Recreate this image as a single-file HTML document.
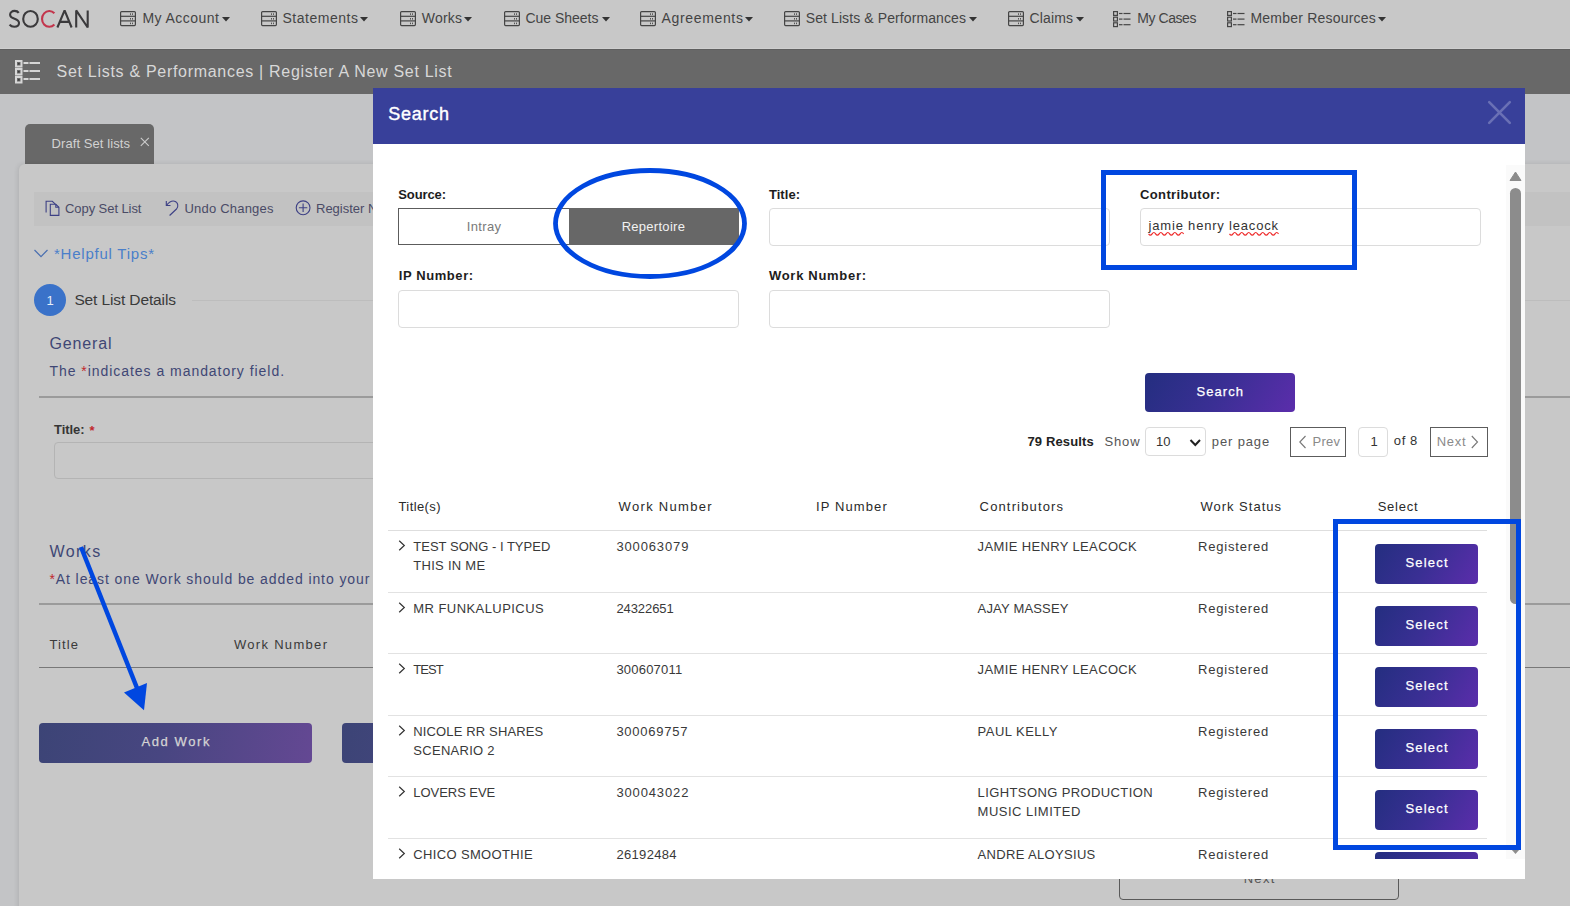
<!DOCTYPE html>
<html><head><meta charset="utf-8"><style>
html,body{margin:0;padding:0;}
body{width:1570px;height:906px;overflow:hidden;position:relative;background:#c3c4c6;font-family:"Liberation Sans", sans-serif;}
</style></head><body>
<div style="position:absolute;left:0px;top:0px;width:1570px;height:48px;background:#c8c8c8"></div>
<div style="position:absolute;left:0px;top:48px;width:1570px;height:1px;background:#cfcfcf"></div>
<div style="position:absolute;left:0px;top:49px;width:1570px;height:45px;background:#686868"></div>
<div style="position:absolute;left:0px;top:49px;width:1570px;height:1px;background:#5f5f5f"></div>
<svg style="position:absolute;left:0px;top:0px;" width="100" height="40" viewBox="0 0 100 40"><g fill="none" stroke="#3b3a3c" stroke-width="2.1" stroke-linejoin="bevel"><path d="M18.7 12.9 C17.8 11.5 16.4 10.9 14.6 10.9 C12 10.9 10.1 12.4 10.1 14.7 C10.1 17 12.1 17.9 14.6 18.7 C17.3 19.6 19 20.7 19 23.1 C19 25.4 17 26.8 14.3 26.8 C12.3 26.8 10.6 26 9.6 24.6"/><ellipse cx="30.5" cy="18.9" rx="7.3" ry="7.9"/><path d="M57.4 27.5 L64.6 10.4 L71.6 27.5 M59.8 21.9 L69.2 21.9"/><path d="M76.2 27.5 V10.4 L87.7 27.5 V10.4"/></g><path d="M54.4 13.2 A7.3 7.9 0 1 0 54.4 24.6" fill="none" stroke="#c3354c" stroke-width="2.1"/></svg>
<svg style="position:absolute;left:120px;top:10.5px;" width="16" height="16" viewBox="0 0 16 16"><g fill="none" stroke="#454545" stroke-width="1.2"><rect x="0.6" y="0.6" width="14.8" height="14" rx="1"/><line x1="0.6" y1="5.3" x2="15.4" y2="5.3"/><line x1="0.6" y1="9.9" x2="15.4" y2="9.9"/></g><g fill="#555"><rect x="10" y="2.3" width="1" height="1.6"/><rect x="12" y="2.3" width="1" height="1.6"/><rect x="10" y="7" width="1" height="1.6"/><rect x="12" y="7" width="1" height="1.6"/><rect x="10" y="11.6" width="1" height="1.6"/><rect x="12" y="11.6" width="1" height="1.6"/></g></svg>
<div style="position:absolute;left:142.40px;top:9.62px;font-size:14px;font-weight:400;color:#444444;letter-spacing:0.458px;white-space:nowrap;line-height:normal;">My Account</div>
<svg style="position:absolute;left:222px;top:17px;" width="8" height="5" viewBox="0 0 8 5"><path d="M0 0 L8 0 L4 4.5 Z" fill="#333"/></svg>
<svg style="position:absolute;left:260.5px;top:10.5px;" width="16" height="16" viewBox="0 0 16 16"><g fill="none" stroke="#454545" stroke-width="1.2"><rect x="0.6" y="0.6" width="14.8" height="14" rx="1"/><line x1="0.6" y1="5.3" x2="15.4" y2="5.3"/><line x1="0.6" y1="9.9" x2="15.4" y2="9.9"/></g><g fill="#555"><rect x="10" y="2.3" width="1" height="1.6"/><rect x="12" y="2.3" width="1" height="1.6"/><rect x="10" y="7" width="1" height="1.6"/><rect x="12" y="7" width="1" height="1.6"/><rect x="10" y="11.6" width="1" height="1.6"/><rect x="12" y="11.6" width="1" height="1.6"/></g></svg>
<div style="position:absolute;left:282.50px;top:9.62px;font-size:14px;font-weight:400;color:#444444;letter-spacing:0.519px;white-space:nowrap;line-height:normal;">Statements</div>
<svg style="position:absolute;left:360px;top:17px;" width="8" height="5" viewBox="0 0 8 5"><path d="M0 0 L8 0 L4 4.5 Z" fill="#333"/></svg>
<svg style="position:absolute;left:400px;top:10.5px;" width="16" height="16" viewBox="0 0 16 16"><g fill="none" stroke="#454545" stroke-width="1.2"><rect x="0.6" y="0.6" width="14.8" height="14" rx="1"/><line x1="0.6" y1="5.3" x2="15.4" y2="5.3"/><line x1="0.6" y1="9.9" x2="15.4" y2="9.9"/></g><g fill="#555"><rect x="10" y="2.3" width="1" height="1.6"/><rect x="12" y="2.3" width="1" height="1.6"/><rect x="10" y="7" width="1" height="1.6"/><rect x="12" y="7" width="1" height="1.6"/><rect x="10" y="11.6" width="1" height="1.6"/><rect x="12" y="11.6" width="1" height="1.6"/></g></svg>
<div style="position:absolute;left:421.80px;top:9.62px;font-size:14px;font-weight:400;color:#444444;letter-spacing:0.195px;white-space:nowrap;line-height:normal;">Works</div>
<svg style="position:absolute;left:464px;top:17px;" width="8" height="5" viewBox="0 0 8 5"><path d="M0 0 L8 0 L4 4.5 Z" fill="#333"/></svg>
<svg style="position:absolute;left:503.5px;top:10.5px;" width="16" height="16" viewBox="0 0 16 16"><g fill="none" stroke="#454545" stroke-width="1.2"><rect x="0.6" y="0.6" width="14.8" height="14" rx="1"/><line x1="0.6" y1="5.3" x2="15.4" y2="5.3"/><line x1="0.6" y1="9.9" x2="15.4" y2="9.9"/></g><g fill="#555"><rect x="10" y="2.3" width="1" height="1.6"/><rect x="12" y="2.3" width="1" height="1.6"/><rect x="10" y="7" width="1" height="1.6"/><rect x="12" y="7" width="1" height="1.6"/><rect x="10" y="11.6" width="1" height="1.6"/><rect x="12" y="11.6" width="1" height="1.6"/></g></svg>
<div style="position:absolute;left:525.50px;top:9.62px;font-size:14px;font-weight:400;color:#444444;letter-spacing:-0.030px;white-space:nowrap;line-height:normal;">Cue Sheets</div>
<svg style="position:absolute;left:601.5px;top:17px;" width="8" height="5" viewBox="0 0 8 5"><path d="M0 0 L8 0 L4 4.5 Z" fill="#333"/></svg>
<svg style="position:absolute;left:639.5px;top:10.5px;" width="16" height="16" viewBox="0 0 16 16"><g fill="none" stroke="#454545" stroke-width="1.2"><rect x="0.6" y="0.6" width="14.8" height="14" rx="1"/><line x1="0.6" y1="5.3" x2="15.4" y2="5.3"/><line x1="0.6" y1="9.9" x2="15.4" y2="9.9"/></g><g fill="#555"><rect x="10" y="2.3" width="1" height="1.6"/><rect x="12" y="2.3" width="1" height="1.6"/><rect x="10" y="7" width="1" height="1.6"/><rect x="12" y="7" width="1" height="1.6"/><rect x="10" y="11.6" width="1" height="1.6"/><rect x="12" y="11.6" width="1" height="1.6"/></g></svg>
<div style="position:absolute;left:661.60px;top:9.62px;font-size:14px;font-weight:400;color:#444444;letter-spacing:0.646px;white-space:nowrap;line-height:normal;">Agreements</div>
<svg style="position:absolute;left:745.4px;top:17px;" width="8" height="5" viewBox="0 0 8 5"><path d="M0 0 L8 0 L4 4.5 Z" fill="#333"/></svg>
<svg style="position:absolute;left:784px;top:10.5px;" width="16" height="16" viewBox="0 0 16 16"><g fill="none" stroke="#454545" stroke-width="1.2"><rect x="0.6" y="0.6" width="14.8" height="14" rx="1"/><line x1="0.6" y1="5.3" x2="15.4" y2="5.3"/><line x1="0.6" y1="9.9" x2="15.4" y2="9.9"/></g><g fill="#555"><rect x="10" y="2.3" width="1" height="1.6"/><rect x="12" y="2.3" width="1" height="1.6"/><rect x="10" y="7" width="1" height="1.6"/><rect x="12" y="7" width="1" height="1.6"/><rect x="10" y="11.6" width="1" height="1.6"/><rect x="12" y="11.6" width="1" height="1.6"/></g></svg>
<div style="position:absolute;left:805.70px;top:9.62px;font-size:14px;font-weight:400;color:#444444;letter-spacing:0.102px;white-space:nowrap;line-height:normal;">Set Lists &amp; Performances</div>
<svg style="position:absolute;left:968.7px;top:17px;" width="8" height="5" viewBox="0 0 8 5"><path d="M0 0 L8 0 L4 4.5 Z" fill="#333"/></svg>
<svg style="position:absolute;left:1007.5px;top:10.5px;" width="16" height="16" viewBox="0 0 16 16"><g fill="none" stroke="#454545" stroke-width="1.2"><rect x="0.6" y="0.6" width="14.8" height="14" rx="1"/><line x1="0.6" y1="5.3" x2="15.4" y2="5.3"/><line x1="0.6" y1="9.9" x2="15.4" y2="9.9"/></g><g fill="#555"><rect x="10" y="2.3" width="1" height="1.6"/><rect x="12" y="2.3" width="1" height="1.6"/><rect x="10" y="7" width="1" height="1.6"/><rect x="12" y="7" width="1" height="1.6"/><rect x="10" y="11.6" width="1" height="1.6"/><rect x="12" y="11.6" width="1" height="1.6"/></g></svg>
<div style="position:absolute;left:1029.50px;top:9.62px;font-size:14px;font-weight:400;color:#444444;letter-spacing:0.144px;white-space:nowrap;line-height:normal;">Claims</div>
<svg style="position:absolute;left:1075.7px;top:17px;" width="8" height="5" viewBox="0 0 8 5"><path d="M0 0 L8 0 L4 4.5 Z" fill="#333"/></svg>
<svg style="position:absolute;left:1113px;top:11px;" width="18.5" height="17" viewBox="0 0 18.5 17"><g fill="none" stroke="#454545" stroke-width="1.2"><rect x="0.6" y="0.6" width="3.8" height="3.8"/><line x1="6" y1="2.5" x2="9.5" y2="2.5"/><line x1="10.5" y1="2.5" x2="17.5" y2="2.5"/><rect x="0.6" y="6.199999999999999" width="3.8" height="3.8"/><line x1="6" y1="8.1" x2="9.5" y2="8.1"/><line x1="10.5" y1="8.1" x2="17.5" y2="8.1"/><rect x="0.6" y="11.799999999999999" width="3.8" height="3.8"/><line x1="6" y1="13.7" x2="9.5" y2="13.7"/><line x1="10.5" y1="13.7" x2="17.5" y2="13.7"/></g></svg>
<div style="position:absolute;left:1137.30px;top:9.62px;font-size:14px;font-weight:400;color:#444444;letter-spacing:-0.448px;white-space:nowrap;line-height:normal;">My Cases</div>
<svg style="position:absolute;left:1227px;top:11px;" width="18.5" height="17" viewBox="0 0 18.5 17"><g fill="none" stroke="#454545" stroke-width="1.2"><rect x="0.6" y="0.6" width="3.8" height="3.8"/><line x1="6" y1="2.5" x2="9.5" y2="2.5"/><line x1="10.5" y1="2.5" x2="17.5" y2="2.5"/><rect x="0.6" y="6.199999999999999" width="3.8" height="3.8"/><line x1="6" y1="8.1" x2="9.5" y2="8.1"/><line x1="10.5" y1="8.1" x2="17.5" y2="8.1"/><rect x="0.6" y="11.799999999999999" width="3.8" height="3.8"/><line x1="6" y1="13.7" x2="9.5" y2="13.7"/><line x1="10.5" y1="13.7" x2="17.5" y2="13.7"/></g></svg>
<div style="position:absolute;left:1250.40px;top:9.62px;font-size:14px;font-weight:400;color:#444444;letter-spacing:0.216px;white-space:nowrap;line-height:normal;">Member Resources</div>
<svg style="position:absolute;left:1378.4px;top:17px;" width="8" height="5" viewBox="0 0 8 5"><path d="M0 0 L8 0 L4 4.5 Z" fill="#333"/></svg>
<svg style="position:absolute;left:15px;top:60px;" width="26" height="24" viewBox="0 0 26 24"><g fill="none" stroke="#d6d6d6" stroke-width="2"><rect x="1" y="1" width="5.5" height="5.5"/><rect x="1" y="9" width="5.5" height="5.5"/><rect x="1" y="17" width="5.5" height="5.5"/></g><g stroke="#d6d6d6" stroke-width="2.2"><path d="M8.5 3 H13.5 M14.5 3 H25 M8.5 11 H13.5 M14.5 11 H25 M8.5 19 H13.5 M14.5 19 H25"/></g><g fill="#3a3a3a"><rect x="3" y="3" width="1.6" height="1.6"/><rect x="3" y="11" width="1.6" height="1.6"/><rect x="3" y="19" width="1.6" height="1.6"/></g></svg>
<div style="position:absolute;left:56.60px;top:63.28px;font-size:16px;font-weight:400;color:#d8d8d8;letter-spacing:0.701px;white-space:nowrap;line-height:normal;">Set Lists &amp; Performances | Register A New Set List</div>
<div style="position:absolute;left:25px;top:124px;width:129px;height:40px;background:#686868;border-radius:5px 5px 0 0"></div>
<div style="position:absolute;left:51.50px;top:135.54px;font-size:13px;font-weight:400;color:#d2d2d2;letter-spacing:0.086px;white-space:nowrap;line-height:normal;">Draft Set lists</div>
<svg style="position:absolute;left:140px;top:137px;" width="10" height="10" viewBox="0 0 10 10"><path d="M0.8 0.8 L8.8 8.8 M8.8 0.8 L0.8 8.8" stroke="#cccccc" stroke-width="1.1"/></svg>
<div style="position:absolute;left:19px;top:164px;width:1600px;height:760px;background:#c8c8c8;border-radius:6px 0 0 0;box-shadow:-1px 0 5px rgba(0,0,0,0.10)"></div>
<div style="position:absolute;left:34px;top:192px;width:1540px;height:34px;background:#c2c2c2"></div>
<svg style="position:absolute;left:45px;top:200px;" width="16" height="17" viewBox="0 0 16 17"><g fill="none" stroke="#3d4085" stroke-width="1.1"><path d="M1.1 12.5 V1.3 H7.3 L10.3 4.2"/><path d="M5.3 15.4 V4.3 H10.8 L13.9 7.3 V15.4 Z"/><path d="M10.8 4.3 V7.3 H13.9"/></g></svg>
<div style="position:absolute;left:65.00px;top:201.04px;font-size:13px;font-weight:400;color:#4a4b66;letter-spacing:-0.069px;white-space:nowrap;line-height:normal;">Copy Set List</div>
<svg style="position:absolute;left:164px;top:199px;" width="16" height="18" viewBox="0 0 16 18"><g fill="none" stroke="#3d4085" stroke-width="1.1"><path d="M2.3 2 V6.5 H6.5"/><path d="M2.6 6.2 C5 3.2 8 1.6 10.5 2.2 C14.5 3.2 14.5 8 12.5 10 L5.6 16.5"/></g></svg>
<div style="position:absolute;left:184.50px;top:201.04px;font-size:13px;font-weight:400;color:#4a4b66;letter-spacing:0.206px;white-space:nowrap;line-height:normal;">Undo Changes</div>
<svg style="position:absolute;left:294px;top:199px;" width="18" height="18" viewBox="0 0 18 18"><g fill="none" stroke="#3d4085" stroke-width="1.1"><circle cx="9.1" cy="8.8" r="6.9"/><path d="M9.1 4.6 V13 M4.9 8.8 H13.3"/></g></svg>
<div style="position:absolute;left:316.00px;top:201.04px;font-size:13px;font-weight:400;color:#4a4b66;letter-spacing:0.000px;white-space:nowrap;line-height:normal;">Register New Set List</div>
<svg style="position:absolute;left:33px;top:248px;" width="17" height="11" viewBox="0 0 17 11"><path d="M1.5 2 L8 8.6 L14.5 2" fill="none" stroke="#4a6fb0" stroke-width="1.2"/></svg>
<div style="position:absolute;left:54.00px;top:244.70px;font-size:15px;font-weight:400;color:#4a7fca;letter-spacing:0.766px;white-space:nowrap;line-height:normal;">*Helpful Tips*</div>
<div style="position:absolute;left:34px;top:284px;width:32px;height:32px;background:#3a72c9;border-radius:50%"></div>
<div style="position:absolute;left:46.50px;top:293.04px;font-size:13px;font-weight:400;color:#e8eef8;letter-spacing:0.000px;white-space:nowrap;line-height:normal;">1</div>
<div style="position:absolute;left:74.40px;top:291.24px;font-size:15.5px;font-weight:400;color:#3a3a3a;letter-spacing:-0.119px;white-space:nowrap;line-height:normal;">Set List Details</div>
<div style="position:absolute;left:192px;top:300px;width:1400px;height:1px;background:#bdbdbd"></div>
<div style="position:absolute;left:49.60px;top:334.58px;font-size:16px;font-weight:400;color:#3f4775;letter-spacing:0.830px;white-space:nowrap;line-height:normal;">General</div>
<div style="position:absolute;left:49.40px;top:362.72px;font-size:14px;font-weight:400;color:#3f4775;letter-spacing:0.960px;white-space:nowrap;line-height:normal;">The <span style="color:#c1272d">*</span>indicates a mandatory field.</div>
<div style="position:absolute;left:39px;top:396px;width:1560px;height:2px;background:#9b9b9b"></div>
<div style="position:absolute;left:54.00px;top:421.54px;font-size:13px;font-weight:700;color:#353535;letter-spacing:-0.046px;white-space:nowrap;line-height:normal;">Title:</div>
<div style="position:absolute;left:89.50px;top:423.04px;font-size:13px;font-weight:700;color:#c1272d;letter-spacing:0.000px;white-space:nowrap;line-height:normal;">*</div>
<div style="position:absolute;left:54px;top:442px;width:1400px;height:37px;border:1px solid #b4b4b4;border-radius:4px;box-sizing:border-box"></div>
<div style="position:absolute;left:49.40px;top:542.88px;font-size:16px;font-weight:400;color:#3f4775;letter-spacing:1.438px;white-space:nowrap;line-height:normal;">Works</div>
<div style="position:absolute;left:49.40px;top:570.62px;font-size:14px;font-weight:400;color:#3f4775;letter-spacing:0.914px;white-space:nowrap;line-height:normal;"><span style="color:#c1272d">*</span>At least one Work should be added into your Set List.</div>
<div style="position:absolute;left:39px;top:603px;width:1560px;height:2px;background:#9b9b9b"></div>
<div style="position:absolute;left:49.40px;top:637.44px;font-size:13px;font-weight:400;color:#3a3a3a;letter-spacing:1.130px;white-space:nowrap;line-height:normal;">Title</div>
<div style="position:absolute;left:233.90px;top:637.44px;font-size:13px;font-weight:400;color:#3a3a3a;letter-spacing:1.315px;white-space:nowrap;line-height:normal;">Work Number</div>
<div style="position:absolute;left:39px;top:667px;width:1560px;height:1px;background:#787878"></div>
<div style="position:absolute;left:39px;top:723px;width:273px;height:40px;background:linear-gradient(100deg,#3c4476 0%,#484681 45%,#644893 100%);border-radius:4px"></div>
<div style="position:absolute;left:141.50px;top:734.44px;font-size:13px;font-weight:400;color:#d4d4d4;letter-spacing:1.579px;white-space:nowrap;line-height:normal;-webkit-text-stroke:0.25px #d4d4d4;">Add Work</div>
<div style="position:absolute;left:342px;top:723px;width:273px;height:40px;background:linear-gradient(100deg,#3c4476 0%,#484681 45%,#644893 100%);border-radius:4px"></div>
<div style="position:absolute;left:1119px;top:840px;width:280px;height:60px;border:1px solid #5a5a5a;border-radius:4px;box-sizing:border-box"></div>
<div style="position:absolute;left:1243.70px;top:871.04px;font-size:13px;font-weight:400;color:#555;letter-spacing:1.289px;white-space:nowrap;line-height:normal;">Next</div>
<svg style="position:absolute;left:60px;top:530px;" width="110" height="190" viewBox="0 0 110 190"><line x1="21" y1="17" x2="77" y2="158" stroke="#0047e0" stroke-width="4.5"/><path d="M64 162.5 L87 153 L84 180.3 Z" fill="#0047e0"/></svg>
<div style="position:absolute;left:373px;top:88px;width:1152px;height:791px;background:#ffffff"></div>
<div style="position:absolute;left:373px;top:88px;width:1152px;height:56px;background:#38409a"></div>
<div style="position:absolute;left:388.30px;top:104.44px;font-size:18px;font-weight:400;color:#ffffff;letter-spacing:0.751px;white-space:nowrap;line-height:normal;-webkit-text-stroke:0.4px #ffffff;">Search</div>
<svg style="position:absolute;left:1487px;top:100px;" width="25" height="25" viewBox="0 0 25 25"><path d="M2.2 2.2 L22.8 22.8 M22.8 2.2 L2.2 22.8" stroke="#6a70b5" stroke-width="2.6" stroke-linecap="round"/></svg>
<div style="position:absolute;left:398.30px;top:187.14px;font-size:13px;font-weight:700;color:#1d1d1d;letter-spacing:-0.118px;white-space:nowrap;line-height:normal;">Source:</div>
<div style="position:absolute;left:768.90px;top:187.14px;font-size:13px;font-weight:700;color:#1d1d1d;letter-spacing:0.074px;white-space:nowrap;line-height:normal;">Title:</div>
<div style="position:absolute;left:1140.00px;top:187.14px;font-size:13px;font-weight:700;color:#1d1d1d;letter-spacing:0.381px;white-space:nowrap;line-height:normal;">Contributor:</div>
<div style="position:absolute;left:398px;top:208px;width:172px;height:37px;border:1px solid #5c5c5c;box-sizing:border-box;background:#fff"></div>
<div style="position:absolute;left:466.80px;top:219.04px;font-size:13px;font-weight:400;color:#7a7a7a;letter-spacing:0.337px;white-space:nowrap;line-height:normal;">Intray</div>
<div style="position:absolute;left:569px;top:208px;width:170px;height:37px;background:#676767"></div>
<div style="position:absolute;left:621.70px;top:219.04px;font-size:13px;font-weight:400;color:#f2f2f2;letter-spacing:0.277px;white-space:nowrap;line-height:normal;">Repertoire</div>
<div style="position:absolute;left:769px;top:208px;width:341px;height:38px;border:1px solid #dcdcdc;border-radius:4px;box-sizing:border-box;background:#fff"></div>
<div style="position:absolute;left:1140px;top:208px;width:341px;height:38px;border:1px solid #dcdcdc;border-radius:4px;box-sizing:border-box;background:#fff"></div>
<div style="position:absolute;left:1148.60px;top:217.84px;font-size:13px;font-weight:400;color:#333;letter-spacing:0.806px;white-space:nowrap;line-height:normal;">jamie henry leacock</div>
<svg style="position:absolute;left:1146px;top:230px;" width="136" height="8" viewBox="0 0 136 8"><path d="M2.6 1.5 q1.75 2.6 3.5 0 q1.75 -2.6 3.5 0 q1.75 2.6 3.5 0 q1.75 -2.6 3.5 0 q1.75 2.6 3.5 0 q1.75 -2.6 3.5 0 q1.75 2.6 3.5 0 q1.75 -2.6 3.5 0 q1.75 2.6 3.5 0 q1.75 -2.6 3.5 0 M83.5 1.5 q1.75 2.6 3.5 0 q1.75 -2.6 3.5 0 q1.75 2.6 3.5 0 q1.75 -2.6 3.5 0 q1.75 2.6 3.5 0 q1.75 -2.6 3.5 0 q1.75 2.6 3.5 0 q1.75 -2.6 3.5 0 q1.75 2.6 3.5 0 q1.75 -2.6 3.5 0 q1.75 2.6 3.5 0 q1.75 -2.6 3.5 0 q1.75 2.6 3.5 0 q1.75 -2.6 3.5 0" fill="none" stroke="#ee2a2a" stroke-width="1.2" transform="translate(0,2.3)"/></svg>
<div style="position:absolute;left:398.70px;top:268.04px;font-size:13px;font-weight:700;color:#1d1d1d;letter-spacing:0.599px;white-space:nowrap;line-height:normal;">IP Number:</div>
<div style="position:absolute;left:769.00px;top:268.04px;font-size:13px;font-weight:700;color:#1d1d1d;letter-spacing:0.697px;white-space:nowrap;line-height:normal;">Work Number:</div>
<div style="position:absolute;left:398px;top:290px;width:341px;height:38px;border:1px solid #dcdcdc;border-radius:4px;box-sizing:border-box;background:#fff"></div>
<div style="position:absolute;left:769px;top:290px;width:341px;height:38px;border:1px solid #dcdcdc;border-radius:4px;box-sizing:border-box;background:#fff"></div>
<div style="position:absolute;left:1145px;top:373px;width:150px;height:39px;background:linear-gradient(120deg,#242e80 0%,#3a2f94 50%,#5b2dab 100%);border-radius:4px"></div>
<div style="position:absolute;left:1196.50px;top:384.24px;font-size:13px;font-weight:400;color:#ffffff;letter-spacing:1.059px;white-space:nowrap;line-height:normal;-webkit-text-stroke:0.25px #ffffff;">Search</div>
<div style="position:absolute;left:1027.50px;top:434.04px;font-size:13px;font-weight:700;color:#222;letter-spacing:0.128px;white-space:nowrap;line-height:normal;">79 Results</div>
<div style="position:absolute;left:1104.50px;top:434.04px;font-size:13px;font-weight:400;color:#555;letter-spacing:0.856px;white-space:nowrap;line-height:normal;">Show</div>
<div style="position:absolute;left:1145px;top:427px;width:61px;height:29px;border:1px solid #dcdcdc;border-radius:4px;box-sizing:border-box;background:#fff"></div>
<div style="position:absolute;left:1156.00px;top:434.04px;font-size:13px;font-weight:400;color:#333;letter-spacing:0.000px;white-space:nowrap;line-height:normal;">10</div>
<svg style="position:absolute;left:1189px;top:438px;" width="13" height="10" viewBox="0 0 13 10"><path d="M1.5 2 L6.3 7 L11 2" fill="none" stroke="#222" stroke-width="2"/></svg>
<div style="position:absolute;left:1211.80px;top:434.04px;font-size:13px;font-weight:400;color:#555;letter-spacing:0.867px;white-space:nowrap;line-height:normal;">per page</div>
<div style="position:absolute;left:1290px;top:427px;width:56px;height:30px;border:1px solid #5c5c5c;box-sizing:border-box"></div>
<svg style="position:absolute;left:1298px;top:435px;" width="10" height="15" viewBox="0 0 10 15"><path d="M7.5 1 L1.8 7 L7.5 13" fill="none" stroke="#777" stroke-width="1.1"/></svg>
<div style="position:absolute;left:1312.50px;top:434.04px;font-size:13px;font-weight:400;color:#8a8a8a;letter-spacing:0.255px;white-space:nowrap;line-height:normal;">Prev</div>
<div style="position:absolute;left:1358px;top:427px;width:30px;height:30px;border:1px solid #dcdcdc;border-radius:4px;box-sizing:border-box;background:#fff"></div>
<div style="position:absolute;left:1370.60px;top:434.04px;font-size:13px;font-weight:400;color:#333;letter-spacing:0.000px;white-space:nowrap;line-height:normal;">1</div>
<div style="position:absolute;left:1393.80px;top:433.24px;font-size:13px;font-weight:400;color:#333;letter-spacing:0.604px;white-space:nowrap;line-height:normal;">of 8</div>
<div style="position:absolute;left:1430px;top:427px;width:58px;height:30px;border:1px solid #5c5c5c;box-sizing:border-box"></div>
<div style="position:absolute;left:1436.70px;top:434.04px;font-size:13px;font-weight:400;color:#8a8a8a;letter-spacing:0.755px;white-space:nowrap;line-height:normal;">Next</div>
<svg style="position:absolute;left:1470px;top:435px;" width="10" height="15" viewBox="0 0 10 15"><path d="M1.8 1 L7.5 7 L1.8 13" fill="none" stroke="#777" stroke-width="1.1"/></svg>
<div style="position:absolute;left:398.50px;top:499.24px;font-size:13px;font-weight:400;color:#2a2a2a;letter-spacing:0.393px;white-space:nowrap;line-height:normal;">Title(s)</div>
<div style="position:absolute;left:618.60px;top:499.24px;font-size:13px;font-weight:400;color:#2a2a2a;letter-spacing:1.315px;white-space:nowrap;line-height:normal;">Work Number</div>
<div style="position:absolute;left:815.90px;top:499.24px;font-size:13px;font-weight:400;color:#2a2a2a;letter-spacing:1.124px;white-space:nowrap;line-height:normal;">IP Number</div>
<div style="position:absolute;left:979.60px;top:499.24px;font-size:13px;font-weight:400;color:#2a2a2a;letter-spacing:1.144px;white-space:nowrap;line-height:normal;">Contributors</div>
<div style="position:absolute;left:1200.40px;top:499.24px;font-size:13px;font-weight:400;color:#2a2a2a;letter-spacing:1.004px;white-space:nowrap;line-height:normal;">Work Status</div>
<div style="position:absolute;left:1377.70px;top:499.24px;font-size:13px;font-weight:400;color:#2a2a2a;letter-spacing:0.752px;white-space:nowrap;line-height:normal;">Select</div>
<div style="position:absolute;left:388px;top:530px;width:1099px;height:1px;background:#dedede"></div>
<div style="position:absolute;left:373px;top:165px;width:1133px;height:694px;overflow:hidden">
<svg style="position:absolute;left:25px;top:375px;" width="8" height="12" viewBox="0 0 8 12"><path d="M1.2 0.8 L6.3 5.5 L1.2 10.2" fill="none" stroke="#333" stroke-width="1.2"/></svg>
<div style="position:absolute;left:40.30px;top:374.04px;font-size:13px;font-weight:400;color:#393939;letter-spacing:0.012px;white-space:nowrap;line-height:normal;">TEST SONG - I TYPED</div>
<div style="position:absolute;left:40.30px;top:393.04px;font-size:13px;font-weight:400;color:#393939;letter-spacing:0.273px;white-space:nowrap;line-height:normal;">THIS IN ME</div>
<div style="position:absolute;left:243.40px;top:374.04px;font-size:13px;font-weight:400;color:#393939;letter-spacing:0.865px;white-space:nowrap;line-height:normal;">300063079</div>
<div style="position:absolute;left:604.60px;top:374.04px;font-size:13px;font-weight:400;color:#393939;letter-spacing:0.362px;white-space:nowrap;line-height:normal;">JAMIE HENRY LEACOCK</div>
<div style="position:absolute;left:825.00px;top:374.04px;font-size:13px;font-weight:400;color:#393939;letter-spacing:0.825px;white-space:nowrap;line-height:normal;">Registered</div>
<div style="position:absolute;left:1002px;top:379px;width:103px;height:40px;background:linear-gradient(120deg,#242e80 0%,#3a2f94 50%,#5b2dab 100%);border-radius:4px"></div>
<div style="position:absolute;left:1032.50px;top:390.04px;font-size:13px;font-weight:400;color:#ffffff;letter-spacing:1.192px;white-space:nowrap;line-height:normal;-webkit-text-stroke:0.25px #ffffff;">Select</div>
<div style="position:absolute;left:15px;top:427px;width:1099px;height:1px;background:#e2e2e2"></div>
<svg style="position:absolute;left:25px;top:437px;" width="8" height="12" viewBox="0 0 8 12"><path d="M1.2 0.8 L6.3 5.5 L1.2 10.2" fill="none" stroke="#333" stroke-width="1.2"/></svg>
<div style="position:absolute;left:40.30px;top:436.04px;font-size:13px;font-weight:400;color:#393939;letter-spacing:0.439px;white-space:nowrap;line-height:normal;">MR FUNKALUPICUS</div>
<div style="position:absolute;left:243.40px;top:436.04px;font-size:13px;font-weight:400;color:#393939;letter-spacing:-0.078px;white-space:nowrap;line-height:normal;">24322651</div>
<div style="position:absolute;left:604.60px;top:436.04px;font-size:13px;font-weight:400;color:#393939;letter-spacing:0.179px;white-space:nowrap;line-height:normal;">AJAY MASSEY</div>
<div style="position:absolute;left:825.00px;top:436.04px;font-size:13px;font-weight:400;color:#393939;letter-spacing:0.825px;white-space:nowrap;line-height:normal;">Registered</div>
<div style="position:absolute;left:1002px;top:441px;width:103px;height:40px;background:linear-gradient(120deg,#242e80 0%,#3a2f94 50%,#5b2dab 100%);border-radius:4px"></div>
<div style="position:absolute;left:1032.50px;top:452.04px;font-size:13px;font-weight:400;color:#ffffff;letter-spacing:1.192px;white-space:nowrap;line-height:normal;-webkit-text-stroke:0.25px #ffffff;">Select</div>
<div style="position:absolute;left:15px;top:488px;width:1099px;height:1px;background:#e2e2e2"></div>
<svg style="position:absolute;left:25px;top:498px;" width="8" height="12" viewBox="0 0 8 12"><path d="M1.2 0.8 L6.3 5.5 L1.2 10.2" fill="none" stroke="#333" stroke-width="1.2"/></svg>
<div style="position:absolute;left:40.30px;top:497.04px;font-size:13px;font-weight:400;color:#393939;letter-spacing:-0.978px;white-space:nowrap;line-height:normal;">TEST</div>
<div style="position:absolute;left:243.40px;top:497.04px;font-size:13px;font-weight:400;color:#393939;letter-spacing:0.211px;white-space:nowrap;line-height:normal;">300607011</div>
<div style="position:absolute;left:604.60px;top:497.04px;font-size:13px;font-weight:400;color:#393939;letter-spacing:0.362px;white-space:nowrap;line-height:normal;">JAMIE HENRY LEACOCK</div>
<div style="position:absolute;left:825.00px;top:497.04px;font-size:13px;font-weight:400;color:#393939;letter-spacing:0.825px;white-space:nowrap;line-height:normal;">Registered</div>
<div style="position:absolute;left:1002px;top:502px;width:103px;height:40px;background:linear-gradient(120deg,#242e80 0%,#3a2f94 50%,#5b2dab 100%);border-radius:4px"></div>
<div style="position:absolute;left:1032.50px;top:513.04px;font-size:13px;font-weight:400;color:#ffffff;letter-spacing:1.192px;white-space:nowrap;line-height:normal;-webkit-text-stroke:0.25px #ffffff;">Select</div>
<div style="position:absolute;left:15px;top:550px;width:1099px;height:1px;background:#e2e2e2"></div>
<svg style="position:absolute;left:25px;top:560px;" width="8" height="12" viewBox="0 0 8 12"><path d="M1.2 0.8 L6.3 5.5 L1.2 10.2" fill="none" stroke="#333" stroke-width="1.2"/></svg>
<div style="position:absolute;left:40.30px;top:559.04px;font-size:13px;font-weight:400;color:#393939;letter-spacing:0.142px;white-space:nowrap;line-height:normal;">NICOLE RR SHARES</div>
<div style="position:absolute;left:40.30px;top:578.04px;font-size:13px;font-weight:400;color:#393939;letter-spacing:0.283px;white-space:nowrap;line-height:normal;">SCENARIO 2</div>
<div style="position:absolute;left:243.40px;top:559.04px;font-size:13px;font-weight:400;color:#393939;letter-spacing:0.740px;white-space:nowrap;line-height:normal;">300069757</div>
<div style="position:absolute;left:604.60px;top:559.04px;font-size:13px;font-weight:400;color:#393939;letter-spacing:0.462px;white-space:nowrap;line-height:normal;">PAUL KELLY</div>
<div style="position:absolute;left:825.00px;top:559.04px;font-size:13px;font-weight:400;color:#393939;letter-spacing:0.825px;white-space:nowrap;line-height:normal;">Registered</div>
<div style="position:absolute;left:1002px;top:564px;width:103px;height:40px;background:linear-gradient(120deg,#242e80 0%,#3a2f94 50%,#5b2dab 100%);border-radius:4px"></div>
<div style="position:absolute;left:1032.50px;top:575.04px;font-size:13px;font-weight:400;color:#ffffff;letter-spacing:1.192px;white-space:nowrap;line-height:normal;-webkit-text-stroke:0.25px #ffffff;">Select</div>
<div style="position:absolute;left:15px;top:611px;width:1099px;height:1px;background:#e2e2e2"></div>
<svg style="position:absolute;left:25px;top:621px;" width="8" height="12" viewBox="0 0 8 12"><path d="M1.2 0.8 L6.3 5.5 L1.2 10.2" fill="none" stroke="#333" stroke-width="1.2"/></svg>
<div style="position:absolute;left:40.30px;top:620.04px;font-size:13px;font-weight:400;color:#393939;letter-spacing:-0.042px;white-space:nowrap;line-height:normal;">LOVERS EVE</div>
<div style="position:absolute;left:243.40px;top:620.04px;font-size:13px;font-weight:400;color:#393939;letter-spacing:0.865px;white-space:nowrap;line-height:normal;">300043022</div>
<div style="position:absolute;left:604.60px;top:620.04px;font-size:13px;font-weight:400;color:#393939;letter-spacing:0.391px;white-space:nowrap;line-height:normal;">LIGHTSONG PRODUCTION</div>
<div style="position:absolute;left:604.60px;top:639.04px;font-size:13px;font-weight:400;color:#393939;letter-spacing:0.492px;white-space:nowrap;line-height:normal;">MUSIC LIMITED</div>
<div style="position:absolute;left:825.00px;top:620.04px;font-size:13px;font-weight:400;color:#393939;letter-spacing:0.825px;white-space:nowrap;line-height:normal;">Registered</div>
<div style="position:absolute;left:1002px;top:625px;width:103px;height:40px;background:linear-gradient(120deg,#242e80 0%,#3a2f94 50%,#5b2dab 100%);border-radius:4px"></div>
<div style="position:absolute;left:1032.50px;top:636.04px;font-size:13px;font-weight:400;color:#ffffff;letter-spacing:1.192px;white-space:nowrap;line-height:normal;-webkit-text-stroke:0.25px #ffffff;">Select</div>
<div style="position:absolute;left:15px;top:673px;width:1099px;height:1px;background:#e2e2e2"></div>
<svg style="position:absolute;left:25px;top:683px;" width="8" height="12" viewBox="0 0 8 12"><path d="M1.2 0.8 L6.3 5.5 L1.2 10.2" fill="none" stroke="#333" stroke-width="1.2"/></svg>
<div style="position:absolute;left:40.30px;top:682.04px;font-size:13px;font-weight:400;color:#393939;letter-spacing:0.350px;white-space:nowrap;line-height:normal;">CHICO SMOOTHIE</div>
<div style="position:absolute;left:243.40px;top:682.04px;font-size:13px;font-weight:400;color:#393939;letter-spacing:0.337px;white-space:nowrap;line-height:normal;">26192484</div>
<div style="position:absolute;left:604.60px;top:682.04px;font-size:13px;font-weight:400;color:#393939;letter-spacing:0.328px;white-space:nowrap;line-height:normal;">ANDRE ALOYSIUS</div>
<div style="position:absolute;left:825.00px;top:682.04px;font-size:13px;font-weight:400;color:#393939;letter-spacing:0.825px;white-space:nowrap;line-height:normal;">Registered</div>
<div style="position:absolute;left:1002px;top:687px;width:103px;height:40px;background:linear-gradient(120deg,#242e80 0%,#3a2f94 50%,#5b2dab 100%);border-radius:4px"></div>
<div style="position:absolute;left:1032.50px;top:698.04px;font-size:13px;font-weight:400;color:#ffffff;letter-spacing:1.192px;white-space:nowrap;line-height:normal;-webkit-text-stroke:0.25px #ffffff;">Select</div>
</div>
<div style="position:absolute;left:1506px;top:165px;width:19px;height:694px;background:#fafafa"></div>
<svg style="position:absolute;left:1509px;top:170.8px;" width="13" height="11" viewBox="0 0 13 11"><path d="M6.5 1 L12 9.5 L1 9.5 Z" fill="#8c8c8c" stroke="#8c8c8c" stroke-width="1" stroke-linejoin="round"/></svg>
<div style="position:absolute;left:1510px;top:188px;width:11px;height:416px;background:#8c8c8c;border-radius:6px"></div>
<svg style="position:absolute;left:1511px;top:849px;" width="9" height="6" viewBox="0 0 9 6"><path d="M0.5 0.5 L8.5 0.5 L4.5 5 Z" fill="#8c8c8c"/></svg>
<svg style="position:absolute;left:550px;top:165px" width="200" height="117" viewBox="0 0 200 117"><ellipse cx="100" cy="58.5" rx="94.5" ry="53" fill="none" stroke="#0047e0" stroke-width="4.8"/></svg>
<div style="position:absolute;left:1101px;top:170px;width:256px;height:100px;border:5px solid #0047e0;box-sizing:border-box"></div>
<div style="position:absolute;left:1333px;top:519px;width:188px;height:331px;border:5px solid #0047e0;box-sizing:border-box"></div>
</body></html>
